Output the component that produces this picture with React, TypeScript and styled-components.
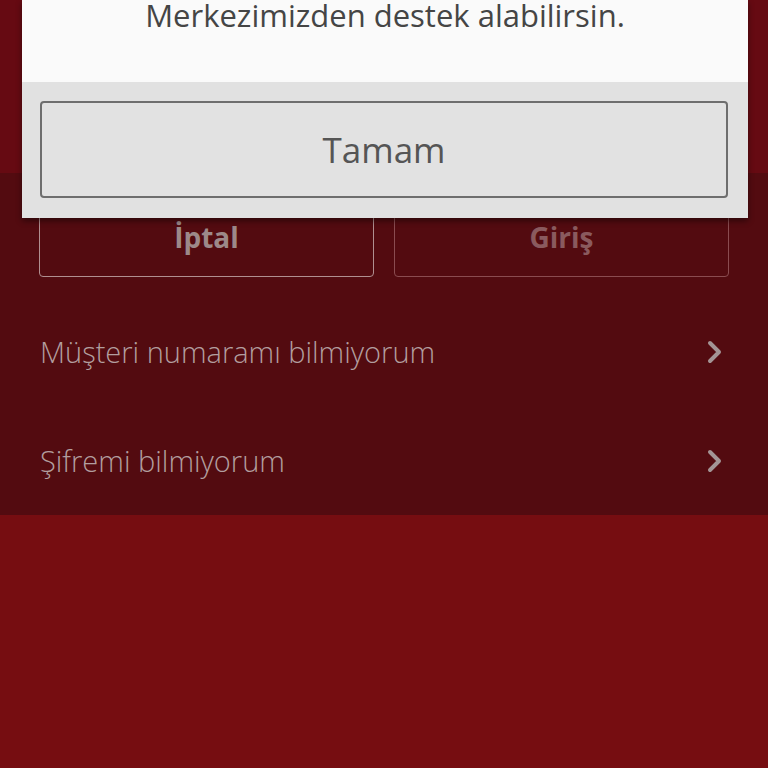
import styled, { createGlobalStyle } from 'styled-components';

const GlobalStyle = createGlobalStyle`
  html, body {
    margin: 0;
    padding: 0;
    height: 100%;
    background: #760d11;
  }
  #root {
    height: 100%;
  }
  * {
    box-sizing: border-box;
  }
`;

const Page = styled.div`
  position: relative;
  height: 768px;
  display: flex;
  flex-direction: column;
  overflow: hidden;
  font-family: 'Open Sans', 'Noto Sans', sans-serif;
`;

const Header = styled.div`
  height: 173px;
  background: #660a12;
`;

const Section = styled.div`
  background: #530b10;
  padding: 24px 39px 0;
`;

const ButtonRow = styled.div`
  display: grid;
  grid-template-columns: 1fr 1fr;
  gap: 20px;
`;

const GhostButton = styled.div<{ $dim?: boolean }>`
  height: 80px;
  display: flex;
  align-items: center;
  justify-content: center;
  border: 1px solid ${({ $dim }) => ($dim ? '#8a4c50' : '#b08f90')};
  border-radius: 4px;
  font-size: 28px;
  font-weight: 700;
  color: ${({ $dim }) => ($dim ? '#8a5a5e' : '#9d8989')};
`;

const List = styled.div`
  margin-top: 20px;
`;

const Row = styled.div`
  height: 109px;
  display: flex;
  align-items: center;
  justify-content: space-between;
  padding: 0 5px 0 1px;
`;

const RowLabel = styled.span`
  font-size: 29px;
  font-weight: 300;
  color: #b29e9f;
`;

const Footer = styled.div`
  flex: 1;
  background: #760d11;
`;

const Dialog = styled.div`
  position: absolute;
  top: 0;
  left: 22px;
  width: 726px;
  box-shadow: 0 3px 6px rgba(0, 0, 0, 0.45);
`;

const Message = styled.div`
  height: 82px;
  background: #fafafa;
  text-align: center;
  font-size: 31px;
  line-height: 31px;
  color: #454545;
`;

const Actions = styled.div`
  background: #e1e1e1;
  padding: 19px 20px 20px 18px;
`;

const OkButton = styled.div`
  height: 97px;
  display: flex;
  align-items: center;
  justify-content: center;
  border: 2px solid #6e6e6e;
  border-radius: 4px;
  background: #e2e2e2;
  font-size: 35px;
  color: #555555;
`;

const Chevron = () => (
  <svg width="18" height="24" viewBox="0 0 18 24">
    <polyline
      points="4,3 13,12 4,21"
      fill="none"
      stroke="#a39495"
      strokeWidth="4"
      strokeLinecap="round"
      strokeLinejoin="round"
    />
  </svg>
);

const rows = ['Müşteri numaramı bilmiyorum', 'Şifremi bilmiyorum'];

export default function App() {
  return (
    <>
      <GlobalStyle />
      <Page>
        <Header />
        <Section>
          <ButtonRow>
            <GhostButton>İptal</GhostButton>
            <GhostButton $dim>Giriş</GhostButton>
          </ButtonRow>
          <List>
            {rows.map((label) => (
              <Row key={label}>
                <RowLabel>{label}</RowLabel>
                <Chevron />
              </Row>
            ))}
          </List>
        </Section>
        <Footer />
        <Dialog>
          <Message>Merkezimizden destek alabilirsin.</Message>
          <Actions>
            <OkButton>Tamam</OkButton>
          </Actions>
        </Dialog>
      </Page>
    </>
  );
}
